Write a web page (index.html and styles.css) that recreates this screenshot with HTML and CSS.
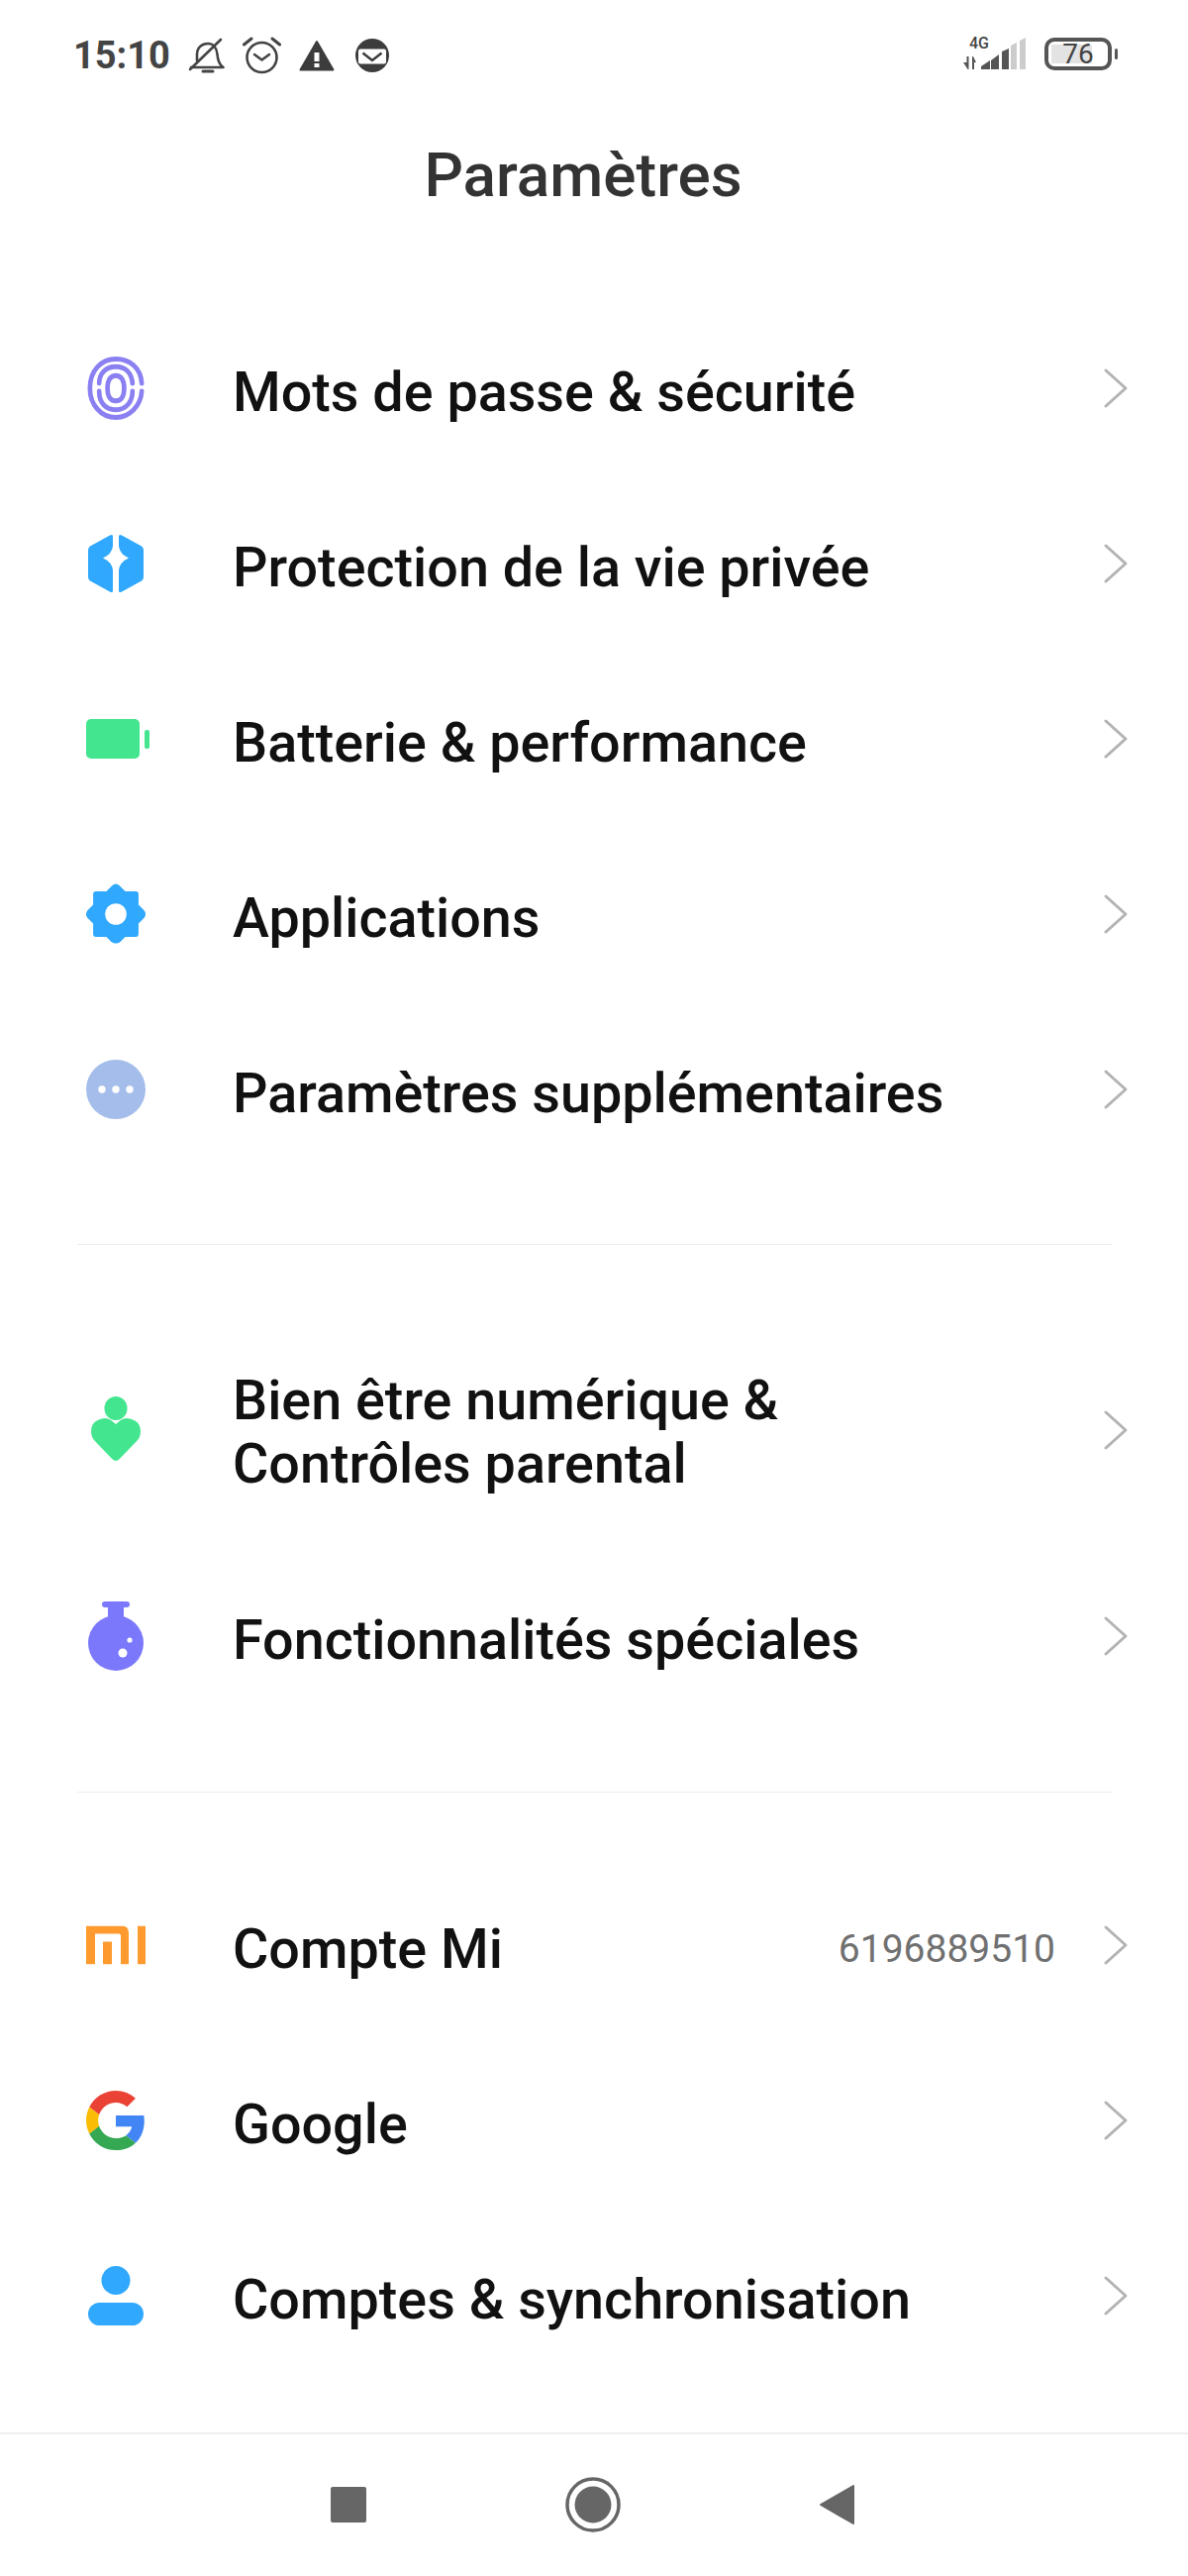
FILE: index.html
```html
<!DOCTYPE html>
<html lang="fr">
<head>
    <meta charset="UTF-8" />
    <title>Paramètres</title>
    <link rel="stylesheet" href="styles.css">
</head>
<body>
    <div class="phone">
        <div class="statusbar">
            <span class="clock">15:10</span>
            <svg width="37" height="36" viewBox="0 0 37 36" fill="none" stroke="#444" stroke-width="2.600" stroke-linecap="round" stroke-linejoin="round"><path d="M9 23V17C9 10 14 6 20 6C26 6 29 11 29.500 17C30 23 31 27 35.500 30H3"/><path d="M15 34h10" stroke-width="3"/><path d="M2 32L33 2"/></svg>
            <svg width="39" height="38" viewBox="0 0 39 38" fill="none" stroke="#444" stroke-width="2.600" stroke-linecap="round" stroke-linejoin="round"><circle cx="19.500" cy="21" r="15"/><path d="M12 18l7.500 5.500L27 18"/><path d="M1.500 8l7.500-6M37.500 8l-7.500-6" stroke-width="3"/></svg>
            <svg width="36" height="32" viewBox="0 0 36 32"><path d="M18 2L34.500 30.500H1.500z" fill="#3c3c3c" stroke="#3c3c3c" stroke-width="2" stroke-linejoin="round"/><path d="M15.500 13h5v9h-5zM15.500 24h5v4h-5z" fill="#fff"/></svg>
            <svg class="mail" width="34" height="34" viewBox="0 0 34 34"><circle cx="17" cy="17" r="17" fill="#3c3c3c"/><rect x="3" y="10.500" width="28" height="15" rx="2" fill="#fff"/><path d="M7.500 14.500l9.500 7.500 9.500-7.500" fill="none" stroke="#3c3c3c" stroke-width="2.500"/></svg>
            <span class="st_right">
                <span class="net">
                    <span class="net_g">4G</span>
                    <svg width="64" height="33" viewBox="0 0 64 33"><path d="M3.500 19h2v13h-1l-4.500-7h3.500zM9 32V19h1l3 6h-2v7z" fill="#555"/><path d="M18 32v-3l9-6v9zM28 32v-9l8-6v15zM39 32V14l7-3v21zM39 32" fill="#555"/><path d="M48 32V8l6-3v27zM57 32V3l6-3v32z" fill="#ccc"/></svg>
                </span>
                <span class="batt">
                    <span class="batt_box"><span class="batt_fill" style="width: 76%"></span><span class="batt_num">76</span></span>
                    <span class="batt_tip"></span>
                </span>
            </span>
        </div>
        <h1 class="title">Paramètres</h1>

        <div class="group">
            <div class="row">
                <svg class="icon" width="58" height="65" viewBox="0 0 62 66" preserveAspectRatio="none" fill="none" stroke="#8a80f2" stroke-width="5" stroke-linecap="round"><path d="M59 28C58 12 46 3 31 3 15 3 3 15 3 33c0 17 12 30 28 30 15 0 27-12 28-27"/><path d="M13 36c0 12 7 19 18 19 11 0 18-8 18-19M49 28C48 17 41 11 31 11 20 11 13 18 13 28"/><path d="M31 20c-6 0-9 5-9 13 0 8 3 13 9 13 6 0 9-5 9-13 0-8-3-13-9-13z"/></svg>
                <span class="label">Mots de passe &amp; sécurité</span>
                <svg class="chev" width="26" height="42" viewBox="0 0 26 42"><path d="M3 3l20 18L3 39" fill="none" stroke="#b3b3b3" stroke-width="3" stroke-linecap="round" stroke-linejoin="round"/></svg>
            </div>
            <div class="row">
                <svg class="icon" width="56" height="59" viewBox="0 0 56 59" fill="#2fa8fd"><path d="M25 2Q25-.5 22 1L2 12Q0 13.500 0 16V43Q0 45.500 2 47L22 58Q25 59.500 25 57V36Q24 28 15 24Q24 20 25 12Z"/><path d="M31 2Q31-.5 34 1L54 12Q56 13.500 56 16V43Q56 45.500 54 47L34 58Q31 59.500 31 57V36Q32 28 41 24Q32 20 31 12Z"/></svg>
                <span class="label">Protection de la vie privée</span>
                <svg class="chev" width="26" height="42" viewBox="0 0 26 42"><path d="M3 3l20 18L3 39" fill="none" stroke="#b3b3b3" stroke-width="3" stroke-linecap="round" stroke-linejoin="round"/></svg>
            </div>
            <div class="row">
                <svg class="icon" width="68" height="40" viewBox="0 0 68 40"><rect x="4" y="0" width="54" height="40" rx="5" fill="#43e58f"/><rect x="63" y="11" width="5" height="19" rx="2" fill="#43e58f"/></svg>
                <span class="label">Batterie &amp; performance</span>
                <svg class="chev" width="26" height="42" viewBox="0 0 26 42"><path d="M3 3l20 18L3 39" fill="none" stroke="#b3b3b3" stroke-width="3" stroke-linecap="round" stroke-linejoin="round"/></svg>
            </div>
            <div class="row">
                <svg class="icon" width="63" height="63" viewBox="0 0 66 66"><path d="M33 1q3 0 5 3l5 5h11q3 0 3 3v11l6 6q3 4 0 8l-6 6v11q0 3-3 3H43l-5 5q-5 4-10 0l-5-5H12q-3 0-3-3V43l-6-6q-3-4 0-8l6-6V12q0-3 3-3h11l5-5q2-3 5-3z" fill="#2fa8fd"/><circle cx="33" cy="33" r="11.300" fill="#fff"/></svg>
                <span class="label">Applications</span>
                <svg class="chev" width="26" height="42" viewBox="0 0 26 42"><path d="M3 3l20 18L3 39" fill="none" stroke="#b3b3b3" stroke-width="3" stroke-linecap="round" stroke-linejoin="round"/></svg>
            </div>
            <div class="row">
                <svg class="icon" width="60" height="60" viewBox="0 0 60 60"><circle cx="30" cy="30" r="30" fill="#a5bdea"/><circle cx="16" cy="30" r="3.700" fill="#fff"/><circle cx="30" cy="30" r="3.700" fill="#fff"/><circle cx="44" cy="30" r="3.700" fill="#fff"/></svg>
                <span class="label">Paramètres supplémentaires</span>
                <svg class="chev" width="26" height="42" viewBox="0 0 26 42"><path d="M3 3l20 18L3 39" fill="none" stroke="#b3b3b3" stroke-width="3" stroke-linecap="round" stroke-linejoin="round"/></svg>
            </div>
        </div>
        <div class="sep"></div>

        <div class="group">
            <div class="row tall">
                <svg class="icon" width="50" height="66" viewBox="0 0 52 66" preserveAspectRatio="none"><circle cx="26" cy="12" r="12" fill="#43e58f"/><path d="M26 65q-2 0-4-2L4 45q-4-4-4-10 0-8 7-11 8-4 14 0l5 4 5-4q6-4 14 0 7 3 7 11 0 6-4 10L30 63q-2 2-4 2z" fill="#43e58f"/></svg>
                <span class="label">Bien être numérique &amp;<br>Contrôles parental</span>
                <svg class="chev" width="26" height="42" viewBox="0 0 26 42"><path d="M3 3l20 18L3 39" fill="none" stroke="#b3b3b3" stroke-width="3" stroke-linecap="round" stroke-linejoin="round"/></svg>
            </div>
            <div class="row">
                <svg class="icon" width="56" height="70" viewBox="0 0 56 70"><rect x="14" y="0" width="28" height="6" rx="3" fill="#7b78fb"/><rect x="20" y="4" width="16" height="14" fill="#7b78fb"/><circle cx="28" cy="42" r="28" fill="#7b78fb"/><circle cx="35" cy="52" r="4.500" fill="#fff"/><circle cx="42" cy="39" r="2.600" fill="#fff"/></svg>
                <span class="label">Fonctionnalités spéciales</span>
                <svg class="chev" width="26" height="42" viewBox="0 0 26 42"><path d="M3 3l20 18L3 39" fill="none" stroke="#b3b3b3" stroke-width="3" stroke-linecap="round" stroke-linejoin="round"/></svg>
            </div>
        </div>
        <div class="sep low"></div>

        <div class="group last">
            <div class="row">
                <svg class="icon" width="60" height="39" viewBox="0 0 60 39"><path d="M0 0h36q7 0 7 7v32h-8V10q0-2-2-2H9v31H0zM17 16h9v23h-9zM52 0h8v39h-8z" fill="#ff9a2e"/></svg>
                <span class="label">Compte Mi</span>
                <span class="val">6196889510</span>
                <svg class="chev" width="26" height="42" viewBox="0 0 26 42"><path d="M3 3l20 18L3 39" fill="none" stroke="#b3b3b3" stroke-width="3" stroke-linecap="round" stroke-linejoin="round"/></svg>
            </div>
            <div class="row">
                <svg class="icon" width="60" height="60" viewBox="0 0 48 48"><path fill="#ea4335" d="M24 9.500c3.500 0 6.700 1.300 9.100 3.500l6.800-6.800C35.800 2.400 30.200 0 24 0 14.600 0 6.500 5.400 2.600 13.200l7.900 6.100C12.400 13.700 17.700 9.500 24 9.500z"/><path fill="#4285f4" d="M47 24.500c0-1.600-.1-3.100-.4-4.500H24v9h12.900c-.6 3-2.200 5.400-4.700 7.100l7.700 6c4.500-4.200 7.100-10.300 7.100-17.600z"/><path fill="#fbbc05" d="M10.500 28.700c-.5-1.400-.8-3-.8-4.700s.3-3.200.8-4.700l-7.900-6.100C.9 16.500 0 20.100 0 24s.9 7.500 2.600 10.800z"/><path fill="#34a853" d="M24 48c6.500 0 11.900-2.100 15.900-5.900l-7.700-6c-2.200 1.400-4.900 2.300-8.200 2.300-6.300 0-11.600-4.200-13.500-9.800l-7.900 6.100C6.500 42.600 14.600 48 24 48z"/></svg>
                <span class="label">Google</span>
                <svg class="chev" width="26" height="42" viewBox="0 0 26 42"><path d="M3 3l20 18L3 39" fill="none" stroke="#b3b3b3" stroke-width="3" stroke-linecap="round" stroke-linejoin="round"/></svg>
            </div>
            <div class="row">
                <svg class="icon" width="56" height="60" viewBox="0 0 56 60"><circle cx="28" cy="14.500" r="14.500" fill="#2fa8fd"/><rect x="0" y="37" width="56" height="23" rx="11.500" fill="#2fa8fd"/></svg>
                <span class="label">Comptes &amp; synchronisation</span>
                <svg class="chev" width="26" height="42" viewBox="0 0 26 42"><path d="M3 3l20 18L3 39" fill="none" stroke="#b3b3b3" stroke-width="3" stroke-linecap="round" stroke-linejoin="round"/></svg>
            </div>
        </div>

        <div class="navbar">
            <span class="nav_square"></span>
            <svg width="56" height="56" viewBox="0 0 56 56"><circle cx="28" cy="28" r="26" fill="none" stroke="#666" stroke-width="3.500"/><circle cx="28" cy="28" r="18.500" fill="#666"/></svg>
            <svg width="35" height="40" viewBox="0 0 35 40"><path d="M34 1v38L1 20z" fill="#666" stroke="#666" stroke-width="2" stroke-linejoin="round"/></svg>
        </div>
    </div>
</body>
</html>
```

FILE: styles.css
```css
* {margin: 0; padding: 0; box-sizing: border-box;}
body {
    background: #fff;
    font-family: Roboto, "Liberation Sans", sans-serif;
}
.phone {
    width: 1200px;
    height: 2601px;
    display: flex;
    flex-direction: column;
    overflow: hidden;
}

/* status bar */
.statusbar {
    height: 112px;
    padding: 0 71px 0 74px;
    display: flex;
    align-items: center;
    gap: 18px;
}
.clock {
    font-size: 38px;
    font-weight: 700;
    color: #444;
}
.mail {
    margin-left: 3px;
}
.st_right {
    margin-left: auto;
    margin-bottom: 3px;
    display: flex;
    align-items: center;
    gap: 18px;
}
.net {
    position: relative;
    width: 64px;
    height: 33px;
    display: flex;
}
.net_g {
    position: absolute;
    top: 0;
    left: 6px;
    font-size: 16px;
    line-height: 11px;
    font-weight: 500;
    color: #444;
}
.batt {
    display: flex;
    align-items: center;
    gap: 3px;
}
.batt_box {
    position: relative;
    width: 68px;
    height: 33px;
    border: 4px solid #555;
    border-radius: 10px;
    padding: 3px;
    display: block;
}
.batt_fill {
    display: block;
    height: 100%;
    background: #e3e3e3;
}
.batt_num {
    position: absolute;
    left: 0;
    right: 0;
    top: -5px;
    text-align: center;
    font-size: 28px;
    line-height: 36px;
    color: #444;
}
.batt_tip {
    width: 3px;
    height: 11px;
    border-radius: 2px;
    background: #555;
}

.title {
    height: 130px;
    padding: 3px 22px 0 0;
    text-align: center;
    font-size: 62px;
    font-weight: 500;
    line-height: 124px;
    color: #333;
}

/* list */
.group {
    margin-top: 65px;
}
.group.last {
    margin-top: 69px;
}
.row {
    height: 177px;
    padding: 0 60px 0 0;
    display: flex;
    align-items: center;
    position: relative;
}
.row.tall {
    height: 245px;
}
.icon {
    position: absolute;
    left: 117px;
    top: calc(50% - 4px);
    transform: translate(-50%, -50%);
}
.row.tall .icon {
    top: calc(50% - 2px);
}
.label {
    margin-left: 235px;
    font-size: 55.700px;
    line-height: 64px;
    font-weight: 500;
    color: #111;
}
.row.tall .label {
    padding-top: 3px;
}
.val {
    margin-left: auto;
    font-size: 39px;
    color: #707070;
    margin-right: 48px;
}
.chev {
    margin-left: auto;
    margin-bottom: 7px;
}
.row.tall .chev {
    margin-bottom: 2px;
}
.val + .chev {
    margin-left: 0;
}
.sep {
    margin: 64px 76px 0 78px;
    height: 1px;
    background: #ececec;
    flex-shrink: 0;
}
.sep.low {
    margin-top: 65px;
}

/* nav bar */
.navbar {
    margin-top: auto;
    height: 145px;
    border-top: 2px solid #eee;
    padding: 0 337px 1px 334px;
    display: flex;
    align-items: center;
    justify-content: space-between;
}
.nav_square {
    width: 36px;
    height: 36px;
    border-radius: 2px;
    background: #666;
}
```
